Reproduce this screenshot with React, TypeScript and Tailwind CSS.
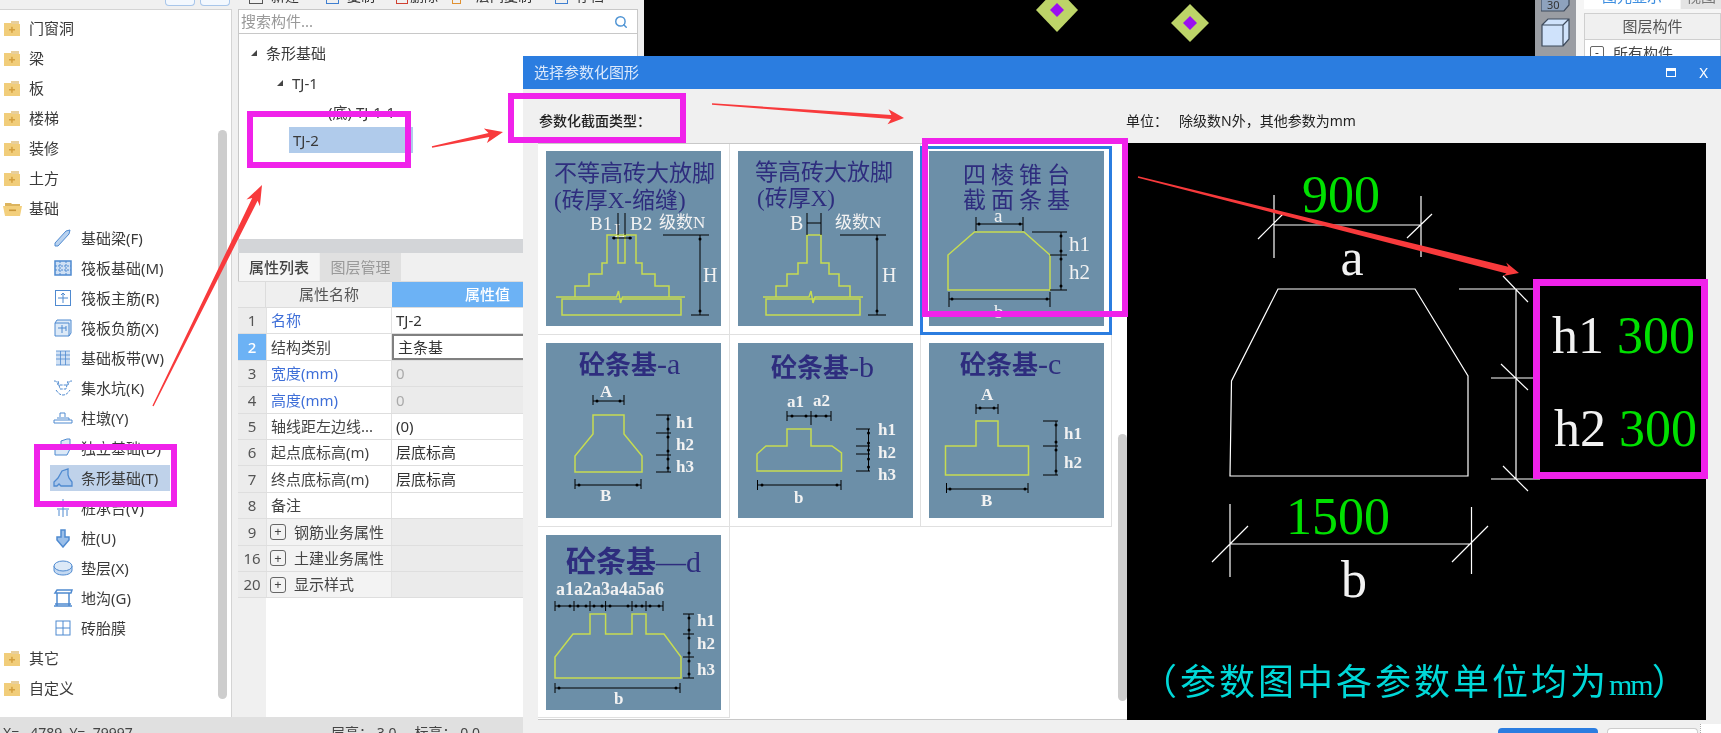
import { Search } from 'lucide-react';

const FONT = '"Liberation Serif","Noto Sans CJK SC",serif';

const topTree = ['门窗洞', '梁', '板', '楼梯', '装修', '土方'];

const children = [
  ['基础梁(F)', 'beam'],
  ['筏板基础(M)', 'raft'],
  ['筏板主筋(R)', 'main'],
  ['筏板负筋(X)', 'neg'],
  ['基础板带(W)', 'band'],
  ['集水坑(K)', 'pit'],
  ['柱墩(Y)', 'pier'],
  ['独立基础(D)', 'iso'],
  ['条形基础(T)', 'strip'],
  ['桩承台(V)', 'cap'],
  ['桩(U)', 'pile'],
  ['垫层(X)', 'pad'],
  ['地沟(G)', 'ditch'],
  ['砖胎膜', 'brick'],
];

const props = [
  { n: 1, name: '名称', val: 'TJ-2', blue: true },
  { n: 2, name: '结构类别', val: '主条基', active: true },
  { n: 3, name: '宽度(mm)', val: '0', blue: true, off: true },
  { n: 4, name: '高度(mm)', val: '0', blue: true, off: true },
  { n: 5, name: '轴线距左边线...', val: '(0)' },
  { n: 6, name: '起点底标高(m)', val: '层底标高' },
  { n: 7, name: '终点底标高(m)', val: '层底标高' },
  { n: 8, name: '备注', val: '' },
  { n: 9, name: '钢筋业务属性', val: '', group: true },
  { n: 16, name: '土建业务属性', val: '', group: true },
  { n: 20, name: '显示样式', val: '', group: true },
];

function Folder({ open }: { open?: boolean }) {
  return (
    <svg width="19" height="17" viewBox="0 0 19 17" className="shrink-0">
      {open ? (
        <>
          <path d="M2 3h6l1 1h8v3H2z" fill="#dcb45e" />
          <path d="M0 6h19l-2 10H2z" fill="#f3cf7c" />
          <rect x="6" y="9.5" width="7" height="1.6" fill="#c9973a" />
        </>
      ) : (
        <>
          <path d="M8 1h8v3H8z" fill="#e8cf9c" />
          <path d="M1 3h7l1 1h8v12H1z" fill="#f1cd7a" />
          <rect x="6" y="9" width="6" height="1.5" fill="#d39f3e" />
          <rect x="8.2" y="6.8" width="1.5" height="6" fill="#d39f3e" />
        </>
      )}
    </svg>
  );
}

function NodeIcon({ kind }: { kind: string }) {
  const s = '#4f8ad0';
  return (
    <svg width="20" height="20" viewBox="0 0 20 20" fill="none" stroke={s} strokeWidth="1" className="shrink-0">
      {kind === 'beam' && <path d="M2 15 13 3l4-1-1 4L5 18l-3 0z" fill="#b9d2ef" />}
      {kind === 'raft' && (
        <>
          <rect x="2" y="3" width="16" height="14" fill="#cfe0f4" strokeWidth="1.5" />
          <path d="M2 8h16M2 12h16M7 3v14M13 3v14" strokeDasharray="2 1" />
        </>
      )}
      {kind === 'main' && (
        <>
          <rect x="2.5" y="2.5" width="15" height="15" />
          <path d="M10 5v10M5 10h10M8 7l2-2 2 2" />
        </>
      )}
      {kind === 'neg' && (
        <>
          <path d="M2 5h14v13H2zM2 5l2-3h14v13l-2 3" fill="#dce9f7" />
          <path d="M5 10h8M9 7v8M13 8v5" />
        </>
      )}
      {kind === 'band' && (
        <>
          <rect x="3" y="3" width="14" height="14" fill="#cfe0f4" stroke="none" />
          <path d="M3 3h14M3 17h14M7.5 3v14M12.5 3v14M3 7h14M3 11h14" strokeOpacity="0.8" />
        </>
      )}
      {kind === 'pit' && <path d="M1 3c3 0 3 1 4 4h10c1-3 1-4 4-4M5 3l2 8h6l2-8M3 12c2 3 4 5 7 5s5-2 7-5" strokeDasharray="3 1" />}
      {kind === 'pier' && <path d="M7 9V5h5v4M4 10h12v2H1v3h18v-3h-3" />}
      {kind === 'iso' && <path d="M2 17V10l6-3V3l6-2h3v10l-3 6zM8 7l9 0" fill="#dce9f7" />}
      {kind === 'strip' && <path d="M1 18v-4l4-4 4-7 6-2v6l1 3 3 4v4H8l-2-2-2 2z" fill="#a9c6ea" strokeWidth="1.3" />}
      {kind === 'cap' && <path d="M10 1v18M6 8l4-5 4 5M6 12v6M14 12v6M4 11h12" />}
      {kind === 'pile' && <path d="M8 2h4v7h4v3l-6 7-6-7V9h4z" fill="#9bbfe9" strokeWidth="1.5" />}
      {kind === 'pad' && (
        <>
          <path d="M1 8v4c0 3 4 5 9 5s9-2 9-5V8" fill="#c4d9f2" />
          <ellipse cx="10" cy="8" rx="9" ry="5" fill="#dce9f7" />
        </>
      )}
      {kind === 'ditch' && <path d="M1 18h18M2 5h16l1-3H4zM4 5v13M16 5v13M2 16h16" strokeWidth="1.5" />}
      {kind === 'brick' && (
        <>
          <rect x="3" y="3" width="14" height="14" />
          <path d="M10 3v14M3 10h14" />
        </>
      )}
    </svg>
  );
}

function Arrow({ x1, y1, x2, y2, shaft, head, len }: { x1: number; y1: number; x2: number; y2: number; shaft: number; head: number; len: number }) {
  const l = Math.hypot(x2 - x1, y2 - y1);
  const dx = (x2 - x1) / l;
  const dy = (y2 - y1) / l;
  const p = (back: number, off: number) => `${x2 - dx * back - dy * off},${y2 - dy * back + dx * off}`;
  const pts = [p(l, 0.7), p(len * 0.8, shaft / 2), p(len, head / 2), `${x2},${y2}`, p(len, -head / 2), p(len * 0.8, -shaft / 2), p(l, -0.7)];
  return <polygon points={pts.join(' ')} fill="#f83a3c" />;
}

function L({ children: t, x, y, size = 14, fill = '#f2f2f2', weight = 400, anchor = 'start' }: { children: string; x: number; y: number; size?: number; fill?: string; weight?: number; anchor?: 'start' | 'middle' }) {
  return (
    <text x={x} y={y} fontSize={size} fill={fill} fontWeight={weight} textAnchor={anchor} fontFamily={FONT} stroke="none">
      {t}
    </text>
  );
}

function Head({ t, tail, x, y, size = 26, tailSize = 30 }: { t: string; tail: string; x: number; y: number; size?: number; tailSize?: number }) {
  return (
    <text x={x} y={y} fill={TITLE} fontFamily={FONT} stroke="none" fontSize={size}>
      <tspan fontWeight={700}>{t}</tspan>
      <tspan fontSize={tailSize}>{tail}</tspan>
    </text>
  );
}

// little dots/arrows on the dimension lines of the thumbnails
function Ends({ pts }: { pts: number[][] }) {
  return (
    <>
      {pts.map(([x, y], i) => (
        <circle key={i} cx={x} cy={y} r="1.500" fill="#000" stroke="none" />
      ))}
    </>
  );
}

function Card({ children: c }: { children: React.ReactNode }) {
  return (
    <svg width="175" height="175" viewBox="0 0 175 175" fill="none" stroke="#000" strokeWidth="1" className="block bg-[#6c8fa8]">
      {c}
    </svg>
  );
}

const Y = { stroke: '#c6dc52', strokeWidth: 1.5 };
const TITLE = '#2e2d7e';

function StepBase({ a, b, c, d, e, f, g, h, lx, rx, bx, ex }: Record<string, number>) {
  return (
    <>
      <path d={`M${d} 146V135H${c}V123H${b}V112H${a}V84H${e}V112H${f}V123H${g}V135H${h}V146`} {...Y} />
      <path d={`M${lx} 146H${(lx + rx) / 2 - 4}l2 -6 2 12 2 -6H${rx}`} {...Y} />
      <rect x={bx} y={148} width={ex - bx} height={16} {...Y} />
    </>
  );
}

const cards = [
  <Card key="1">
    <L x={8} y={30} size={23} fill={TITLE}>不等高砖大放脚</L>
    <L x={8} y={57} size={23} fill={TITLE}>(砖厚X-缩缝)</L>
    <L x={44} y={79} size={19}>B1</L>
    <L x={68} y={86} size={19}>L</L>
    <L x={84} y={79} size={19}>B2</L>
    <L x={113} y={77} size={17}>级数N</L>
    <StepBase a={61} b={56} c={43} d={29} e={90} f={96} g={109} h={123} lx={10} rx={139} bx={16} ex={135} />
    <path d="M72 84v28h7V84" {...Y} />
    <path d="M72 62v22M79 62v22M66 87h20M117 84h46M145 164h18M154 84v80" />
    <Ends pts={[[154, 88], [154, 160], [68, 87], [84, 87]]} />
    <L x={157} y={131} size={20}>H</L>
  </Card>,
  <Card key="2">
    <L x={17} y={29} size={23} fill={TITLE}>等高砖大放脚</L>
    <L x={19} y={55} size={23} fill={TITLE}>(砖厚X)</L>
    <L x={52} y={79} size={20}>B</L>
    <L x={97} y={77} size={17}>级数N</L>
    <StepBase a={69} b={60} c={49} d={38} e={83} f={91} g={101} h={112} lx={25} rx={125} bx={28} ex={122} />
    <path d="M69 62v22M83 62v22M69 72h14M102 84h46M130 164h18M139 84v80" />
    <Ends pts={[[139, 88], [139, 160]]} />
    <L x={144} y={131} size={20}>H</L>
  </Card>,
  <Card key="3">
    <text x={34} y={32} fontSize={23} fill={TITLE} letterSpacing={5} fontFamily={FONT} stroke="none">四棱锥台</text>
    <text x={34} y={57} fontSize={23} fill={TITLE} letterSpacing={5} fontFamily={FONT} stroke="none">截面条基</text>
    <L x={65} y={71} size={19}>a</L>
    <path d="M45.5 81H95L121 104V139H19V104Z" {...Y} />
    <path d="M47 66v14M94 66v14M47 73h47M103 81h35M121 104h17M121 139h17M132 81v58M20 141v15M121 141v15M20 148h101" />
    <Ends pts={[[50, 73], [91, 73], [132, 85], [132, 100], [132, 108], [132, 135], [23, 148], [118, 148]]} />
    <L x={140} y={100} size={21}>h1</L>
    <L x={140} y={128} size={21}>h2</L>
    <L x={65} y={167} size={19}>b</L>
  </Card>,
  <Card key="4">
    <Head t="砼条基" tail="-a" x={33} y={31} />
    <L x={54} y={54} size={17} weight={700}>A</L>
    <path d="M47 72H78V91L96 113V129H29V113L47 91Z" {...Y} />
    <path d="M47 52v10M78 52v10M47 58h31M110 72h15M110 90h15M110 112h15M110 129h15M122 72v57M29 136v10M95 136v10M29 142h66" />
    <Ends pts={[[51, 58], [74, 58], [122, 76], [122, 86], [122, 94], [122, 108], [122, 116], [122, 125], [33, 142], [91, 142]]} />
    <L x={130} y={85} size={17} weight={700}>h1</L>
    <L x={130} y={107} size={17} weight={700}>h2</L>
    <L x={130} y={129} size={17} weight={700}>h3</L>
    <L x={54} y={158} size={17} weight={700}>B</L>
  </Card>,
  <Card key="5">
    <Head t="砼条基" tail="-b" x={33} y={34} />
    <L x={49} y={64} size={17} weight={700}>a1</L>
    <L x={75} y={63} size={17} weight={700}>a2</L>
    <path d="M49 86H73V103H94L103.500 110V128H19V111L28 103H49Z" {...Y} />
    <path d="M49 68v10M73 68v14M93 68v10M49 73h44M118 86h14M118 103h14M118 111h14M118 128h14M130.500 86v42M19.500 137v10M103 137v10M19.500 142h83.500" />
    <Ends pts={[[54, 73], [68, 73], [78, 73], [88, 73], [130.5, 90], [130.5, 100], [130.5, 107], [130.5, 116], [130.5, 124], [24, 142], [99, 142]]} />
    <L x={140} y={92} size={17} weight={700}>h1</L>
    <L x={140} y={115} size={17} weight={700}>h2</L>
    <L x={140} y={137} size={17} weight={700}>h3</L>
    <L x={56} y={160} size={17} weight={700}>b</L>
  </Card>,
  <Card key="6">
    <Head t="砼条基" tail="-c" x={31} y={31} />
    <L x={52} y={57} size={17} weight={700}>A</L>
    <path d="M47 78H69V103H99.500V132H16.500V103H47Z" {...Y} />
    <path d="M47 61v10M69 61v10M47 65h22M114 78h15M114 103h15M114 132h15M127 78v54M17.500 140v10M99 140v10M17.500 146h81.500" />
    <Ends pts={[[51, 65], [65, 65], [127, 82], [127, 99], [127, 107], [127, 128], [21, 146], [96, 146]]} />
    <L x={135} y={96} size={17} weight={700}>h1</L>
    <L x={135} y={125} size={17} weight={700}>h2</L>
    <L x={52} y={163} size={17} weight={700}>B</L>
  </Card>,
  <Card key="7">
    <Head t="砼条基" tail="—d" x={20} y={37} size={30} tailSize={30} />
    <L x={10} y={60} size={18} weight={700}>a1a2a3a4a5a6</L>
    <path d="M44 79H59.600V99H86V79H100V99H118L135 122V143H9V122L27 99H44Z" {...Y} />
    <path d="M9 66v10M28 66v10M44 66v10M59.600 66v10M86 66v10M100 66v10M117 66v10M9 71h108M137 79h11M137 99h11M137 122h11M137 143h11M143 79v64M9 148v10M134 148v10M9 153h125" />
    <Ends pts={[[13, 71], [24, 71], [32, 71], [40, 71], [48, 71], [56, 71], [64, 71], [82, 71], [90, 71], [96, 71], [104, 71], [113, 71], [143, 83], [143, 95], [143, 103], [143, 118], [143, 126], [143, 139], [13, 153], [130, 153]]} />
    <L x={151} y={91} size={17} weight={700}>h1</L>
    <L x={151} y={114} size={17} weight={700}>h2</L>
    <L x={151} y={140} size={17} weight={700}>h3</L>
    <L x={68} y={169} size={17} weight={700}>b</L>
  </Card>,
];

export default function App() {
  return (
    <div className="relative w-[1721px] h-[733px] overflow-hidden bg-[#f0f0f0] text-[15px] text-[#333] font-['Noto_Sans','Noto_Sans_CJK_SC',sans-serif] blur-[0.4px]">
      <div className="flex h-[717px]">
        {/* left tree */}
        <div className="w-[232px] flex flex-col shrink-0">
          <div className="h-[9px] flex justify-end gap-[5px] pr-[2px] overflow-hidden">
            <div className="w-[30px] h-[6px] rounded-b border-x border-b border-[#a8c6ea] bg-[#f3f8fe]" />
            <div className="w-[30px] h-[6px] rounded-b border-x border-b border-[#a8c6ea] bg-[#f3f8fe]" />
          </div>
          <div className="flex-1 flex bg-white border-t border-r border-[#d4d4d4] min-h-0">
            <div className="flex-1 pt-[3px] text-[#3a3a3a] leading-[30px]">
              {topTree.map((t) => (
                <div key={t} className="h-[30px] flex items-center gap-[7px] pl-[3px]">
                  <Folder />
                  <span>{t}</span>
                </div>
              ))}
              <div className="h-[30px] flex items-center gap-[7px] pl-[3px]">
                <Folder open />
                <span>基础</span>
              </div>
              {children.map(([t, k]) => (
                <div key={t} className="h-[30px] flex items-center pl-[50px]">
                  <div className={k === 'strip' ? 'flex items-center gap-[8px] pl-[3px] w-[120px] h-[26px] bg-[#bfd2ea]' : 'flex items-center gap-[8px] pl-[3px]'}>
                    <NodeIcon kind={k} />
                    <span>{t}</span>
                  </div>
                </div>
              ))}
              <div className="h-[30px] flex items-center gap-[7px] pl-[3px]">
                <Folder />
                <span>其它</span>
              </div>
              <div className="h-[30px] flex items-center gap-[7px] pl-[3px]">
                <Folder />
                <span>自定义</span>
              </div>
            </div>
            <div className="w-[9px] mr-[4px] mt-[120px] mb-[18px] rounded-full bg-[#cdcdcd]" />
          </div>
        </div>

        {/* component list + properties */}
        <div className="w-[400px] ml-[6px] flex flex-col shrink-0">
          <div className="h-[10px] overflow-hidden flex items-start pl-[11px] border-b border-[#c8c8c8] text-[14px] leading-[20px]">
            <div className="h-[4px] w-[14px] border-x border-b border-[#555] shrink-0" />
            <span className="-mt-[14px] ml-[8px] w-[55px]">新建</span>
            <div className="h-[4px] w-[13px] border-x border-b border-[#3f7fd0] shrink-0" />
            <span className="-mt-[14px] ml-[8px] w-[49px]">复制</span>
            <div className="h-[4px] w-[12px] border-x border-b border-[#d04030] shrink-0" />
            <span className="-mt-[14px] ml-[2px] w-[42px]">删除</span>
            <div className="h-[4px] w-[9px] border-x border-b border-[#e09030] shrink-0" />
            <span className="-mt-[14px] ml-[15px] w-[79px]">层间复制</span>
            <div className="h-[4px] w-[13px] border-x border-b border-[#3f7fd0] shrink-0" />
            <span className="-mt-[14px] ml-[8px]">存档</span>
          </div>
          <div className="h-[24px] bg-white border-b border-x border-[#c8c8c8] flex items-center justify-between pl-[2px] pr-[9px] text-[#999]">
            <span>搜索构件...</span>
            <Search size={14} strokeWidth={2.5} className="text-[#4f94d4]" />
          </div>
          <div className="h-[205px] bg-white border-x border-[#c8c8c8] text-[#3a3a3a]">
            <div className="flex items-center h-[30px] mt-[4px] pl-[12px] gap-[9px]">
              <svg width="6" height="6" viewBox="0 0 6 6" className="fill-[#444]"><path d="M6 0v6H0z" /></svg>
              <span>条形基础</span>
            </div>
            <div className="flex items-center h-[30px] pl-[38px] gap-[9px]">
              <svg width="6" height="6" viewBox="0 0 6 6" className="fill-[#444]"><path d="M6 0v6H0z" /></svg>
              <span>TJ-1</span>
            </div>
            <div className="h-[30px] pl-[89px] flex items-center -mt-[1px]">(底) TJ-1-1</div>
            <div className="ml-[50px] w-[124px] h-[26px] pl-[4px] bg-[#b0cbeb] flex items-center">TJ-2</div>
          </div>
          <div className="h-[14px] bg-[#d3d5d8]" />
          <div className="h-[28px] flex border-x border-[#c8c8c8]">
            <div className="w-[80px] flex items-center justify-center bg-[#f5f5f5] font-medium text-[#444]">属性列表</div>
            <div className="w-[81px] ml-[1px] flex items-center justify-center bg-[#e0e0e0] text-[#999]">图层管理</div>
          </div>
          <div className="flex h-[27px] border-y border-[#dcdcdc] bg-[#efefef]">
            <div className="w-[28px] border-r border-[#dcdcdc]" />
            <div className="w-[126px] flex items-center justify-center text-[#555]">属性名称</div>
            <div className="flex-1 bg-[#6cb2f5] text-white font-medium flex items-center pl-[73px]">属性值</div>
          </div>
          {props.map((r) => (
            <div key={r.n} className="flex h-[26.4px] border-b border-[#dedede] bg-white">
              <div className={r.active ? 'w-[28px] bg-[#6cb2f5] text-white font-medium flex items-center justify-center' : 'w-[28px] bg-[#ececec] text-[#555] flex items-center justify-center'}>{r.n}</div>
              <div className={(r.group ? 'bg-[#f3f3f3] ' : '') + (r.blue ? 'text-[#3f6fd8] ' : 'text-[#444] ') + (r.group ? 'pl-[3px] ' : 'pl-[4px] ') + 'w-[126px] flex items-center gap-[8px] border-x border-[#e2e2e2] whitespace-nowrap'}>
                {r.group && <span className="w-[16px] h-[16px] border border-[#666] rounded-[3px] flex items-center justify-center text-[13px] leading-none">+</span>}
                {r.name}
              </div>
              <div className={(r.active ? 'border-2 border-r-0 border-[#808080] ' : '') + (r.off || r.group ? 'bg-[#ebebeb] ' : '') + (r.off ? 'text-[#aaa] ' : 'text-[#333] ') + 'flex-1 pl-[4px] flex items-center'}>{r.val}</div>
            </div>
          ))}
          <div className="flex-1 flex bg-white">
            <div className="w-[28px] bg-[#f0f0f0]" />
          </div>
        </div>

        {/* black drawing canvas */}
        <div className="flex-1 ml-[6px] bg-black">
          <svg width="891" height="56" viewBox="0 0 891 56" className="block">
            <polygon points="413,-12 434,10 413,32 392,10" fill="#bdd468" />
            <polygon points="413,3 420,10 413,17 406,10" fill="#9a10f0" />
            <polygon points="546,4 565,23 546,42 527,23" fill="#bdd468" />
            <polygon points="546,16 553,23 546,30 539,23" fill="#9a10f0" />
          </svg>
        </div>

        {/* view toolbar */}
        <div className="w-[41px] bg-[#9a9da3] shrink-0 pl-[6px]">
          <svg width="30" height="50" viewBox="0 0 30 50" fill="none" stroke="#3d4a5c" strokeWidth="1.200" className="block">
            <path d="M0 -8h24l4 -3v16l-5 6H0z" fill="#8ea2bd" />
            <text x="6" y="9" fontSize="11" fill="#333" stroke="none">30</text>
            <path d="M1 25h21v21H1zM1 25l6-6h21v20l-6 7M22 25l6-6" fill="#cfe2fb" />
          </svg>
        </div>

        {/* right panel */}
        <div className="w-[145px] shrink-0 bg-[#f5f5f5] pl-[8px]">
          <div className="h-[13px] flex overflow-hidden leading-[20px]">
            <div className="w-[96px] h-[9px] bg-white text-center text-[#3f8fe0] overflow-hidden">
              <div className="-mt-[14px]">图元显示</div>
            </div>
            <div className="flex-1 h-[9px] ml-[1px] bg-[#e4e4e4] text-center text-[#777] overflow-hidden">
              <div className="-mt-[14px]">视图</div>
            </div>
          </div>
          <div className="border border-[#cfcfcf] h-[100px] bg-white">
            <div className="h-[26px] bg-[#f0f0f0] border-b border-[#cfcfcf] flex items-center justify-center text-[#555]">图层构件</div>
            <div className="flex items-center h-[26px] pl-[5px] gap-[9px] text-[#444]">
              <span className="w-[14px] h-[14px] border border-[#666] rounded-[2px] flex items-center justify-center text-[12px] leading-none">-</span>
              <span>所有构件</span>
            </div>
          </div>
        </div>
      </div>

      {/* status bar */}
      <div className="h-[16px] bg-[#e0e0e0] overflow-hidden flex text-[14px] text-[#444] pt-[6px] leading-[20px] pl-[3px]">
        <span className="w-[328px] whitespace-pre">X=   4789  Y=  79997</span>
        <span className="whitespace-pre">层高： 3.0     标高： 0.0</span>
      </div>

      {/* parametric dialog */}
      <div className="absolute left-[523px] top-[56px] w-[1198px] h-[677px] flex flex-col bg-[#f0f0f0] text-[14px]">
        <div className="h-[33px] bg-[#2b7de0] flex items-center justify-between pl-[11px] pr-[13px] text-[#dbe9fb] text-[15px]">
          <span>选择参数化图形</span>
          <div className="flex items-center gap-[23px] text-white">
            <span className="w-[10px] h-[9px] border border-t-[3px] border-white" />
            <span className="leading-none">X</span>
          </div>
        </div>
        <div className="h-[54px] flex items-center pl-[16px] pt-[8px] text-[#222]">
          <span className="w-[587px] font-medium">参数化截面类型：</span>
          <span className="w-[53px]">单位：</span>
          <span>除级数N外，其他参数为mm</span>
        </div>
        <div className="flex h-[577px] ml-[15px]">
          <div className="w-[589px] flex border-y border-[#c8c8c8] bg-white">
            <div className="w-[574px] grid grid-cols-[192px_191px_191px] grid-rows-[191px_192px_191px] content-start">
              {cards.map((card, i) => (
                <div key={i} className={i === 2 ? 'pt-[2px] pl-[6px] -ml-[1px] mt-[2px] border-[3px] border-[#2b7de0] h-[189px]' : i < 2 ? 'pt-[7px] px-[8px] border-r border-b border-[#e0e0e0]' : 'p-[8px] border-r border-b border-[#e0e0e0]'}>
                  {card}
                </div>
              ))}
            </div>
            <div className="w-[9px] ml-[6px] mt-[290px] mb-[18px] rounded-full bg-[#cdcdcd]" />
          </div>
          <div className="w-[579px] bg-black">
            <svg width="579" height="577" viewBox="0 0 579 577" fill="none" stroke="#fff" strokeWidth="1.200" className="block">
              <path d="M151 146H288L341 233V333H103L104.500 238Z" />
              <path d="M147 52V115M294 53V114M147 82H294M131 96L156 71M280 95L305 71" />
              <path d="M103 361V434M344.500 364V431M103 401H344.500M85 419L121 383M325 419L361 383" />
              <path d="M332 146H406M364 235H406M364 336H413M389 146V336M376 133L401 159M374 221L401 247M376 323L401 348" />
              <L x={214} y={69} size={52} fill="#00e000" anchor="middle">900</L>
              <L x={225} y={132} size={52} anchor="middle">a</L>
              <L x={211} y={391} size={52} fill="#00e000" anchor="middle">1500</L>
              <L x={227} y={454} size={52} anchor="middle">b</L>
              <L x={425} y={210} size={52}>h1</L>
              <L x={490} y={210} size={52} fill="#00e000">300</L>
              <L x={427} y={303} size={52}>h2</L>
              <L x={492} y={303} size={52} fill="#00e000">300</L>
              <text x={14} y={552} fontSize={36} fill="#00d8d8" letterSpacing={3} fontFamily={FONT} stroke="none">
                （参数图中各参数单位均为<tspan fontSize={30} letterSpacing={-2}>mm</tspan>）
              </text>
            </svg>
          </div>
        </div>
        <div className="flex-1 flex justify-end items-end gap-[9px]">
          <div className="w-[100px] h-[5px] bg-[#2b7de0] rounded-t" />
          <div className="w-[91px] h-[5px] bg-white border-x border-t border-[#ccc] rounded-t" />
          <div className="w-[21px] h-[9px] -ml-[7px] bg-white border-l border-dotted border-[#aaa]" />
        </div>
      </div>

      {/* annotations */}
      <div className="absolute left-[34px] top-[444px] w-[143px] h-[63px] border-[6px] border-[#f022ea]" />
      <div className="absolute left-[247px] top-[111px] w-[164px] h-[57px] border-[6px] border-[#f022ea]" />
      <div className="absolute left-[508px] top-[93px] w-[178px] h-[50px] border-[6px] border-[#f022ea]" />
      <div className="absolute left-[922px] top-[138px] w-[206px] h-[179px] border-[6px] border-[#f022ea]" />
      <div className="absolute left-[1533px] top-[279px] w-[175px] h-[200px] border-[7px] border-[#f022ea]" />
      <svg width="1721" height="733" viewBox="0 0 1721 733" className="absolute left-0 top-0 pointer-events-none">
        <Arrow x1={153} y1={406} x2={262} y2={185} shaft={6} head={15} len={20} />
        <Arrow x1={432} y1={147} x2={503} y2={132} shaft={4} head={15} len={18} />
        <Arrow x1={712} y1={104} x2={904} y2={118} shaft={4} head={15} len={16} />
        <Arrow x1={1138} y1={177} x2={1519} y2={273} shaft={7} head={14} len={15} />
      </svg>
    </div>
  );
}
